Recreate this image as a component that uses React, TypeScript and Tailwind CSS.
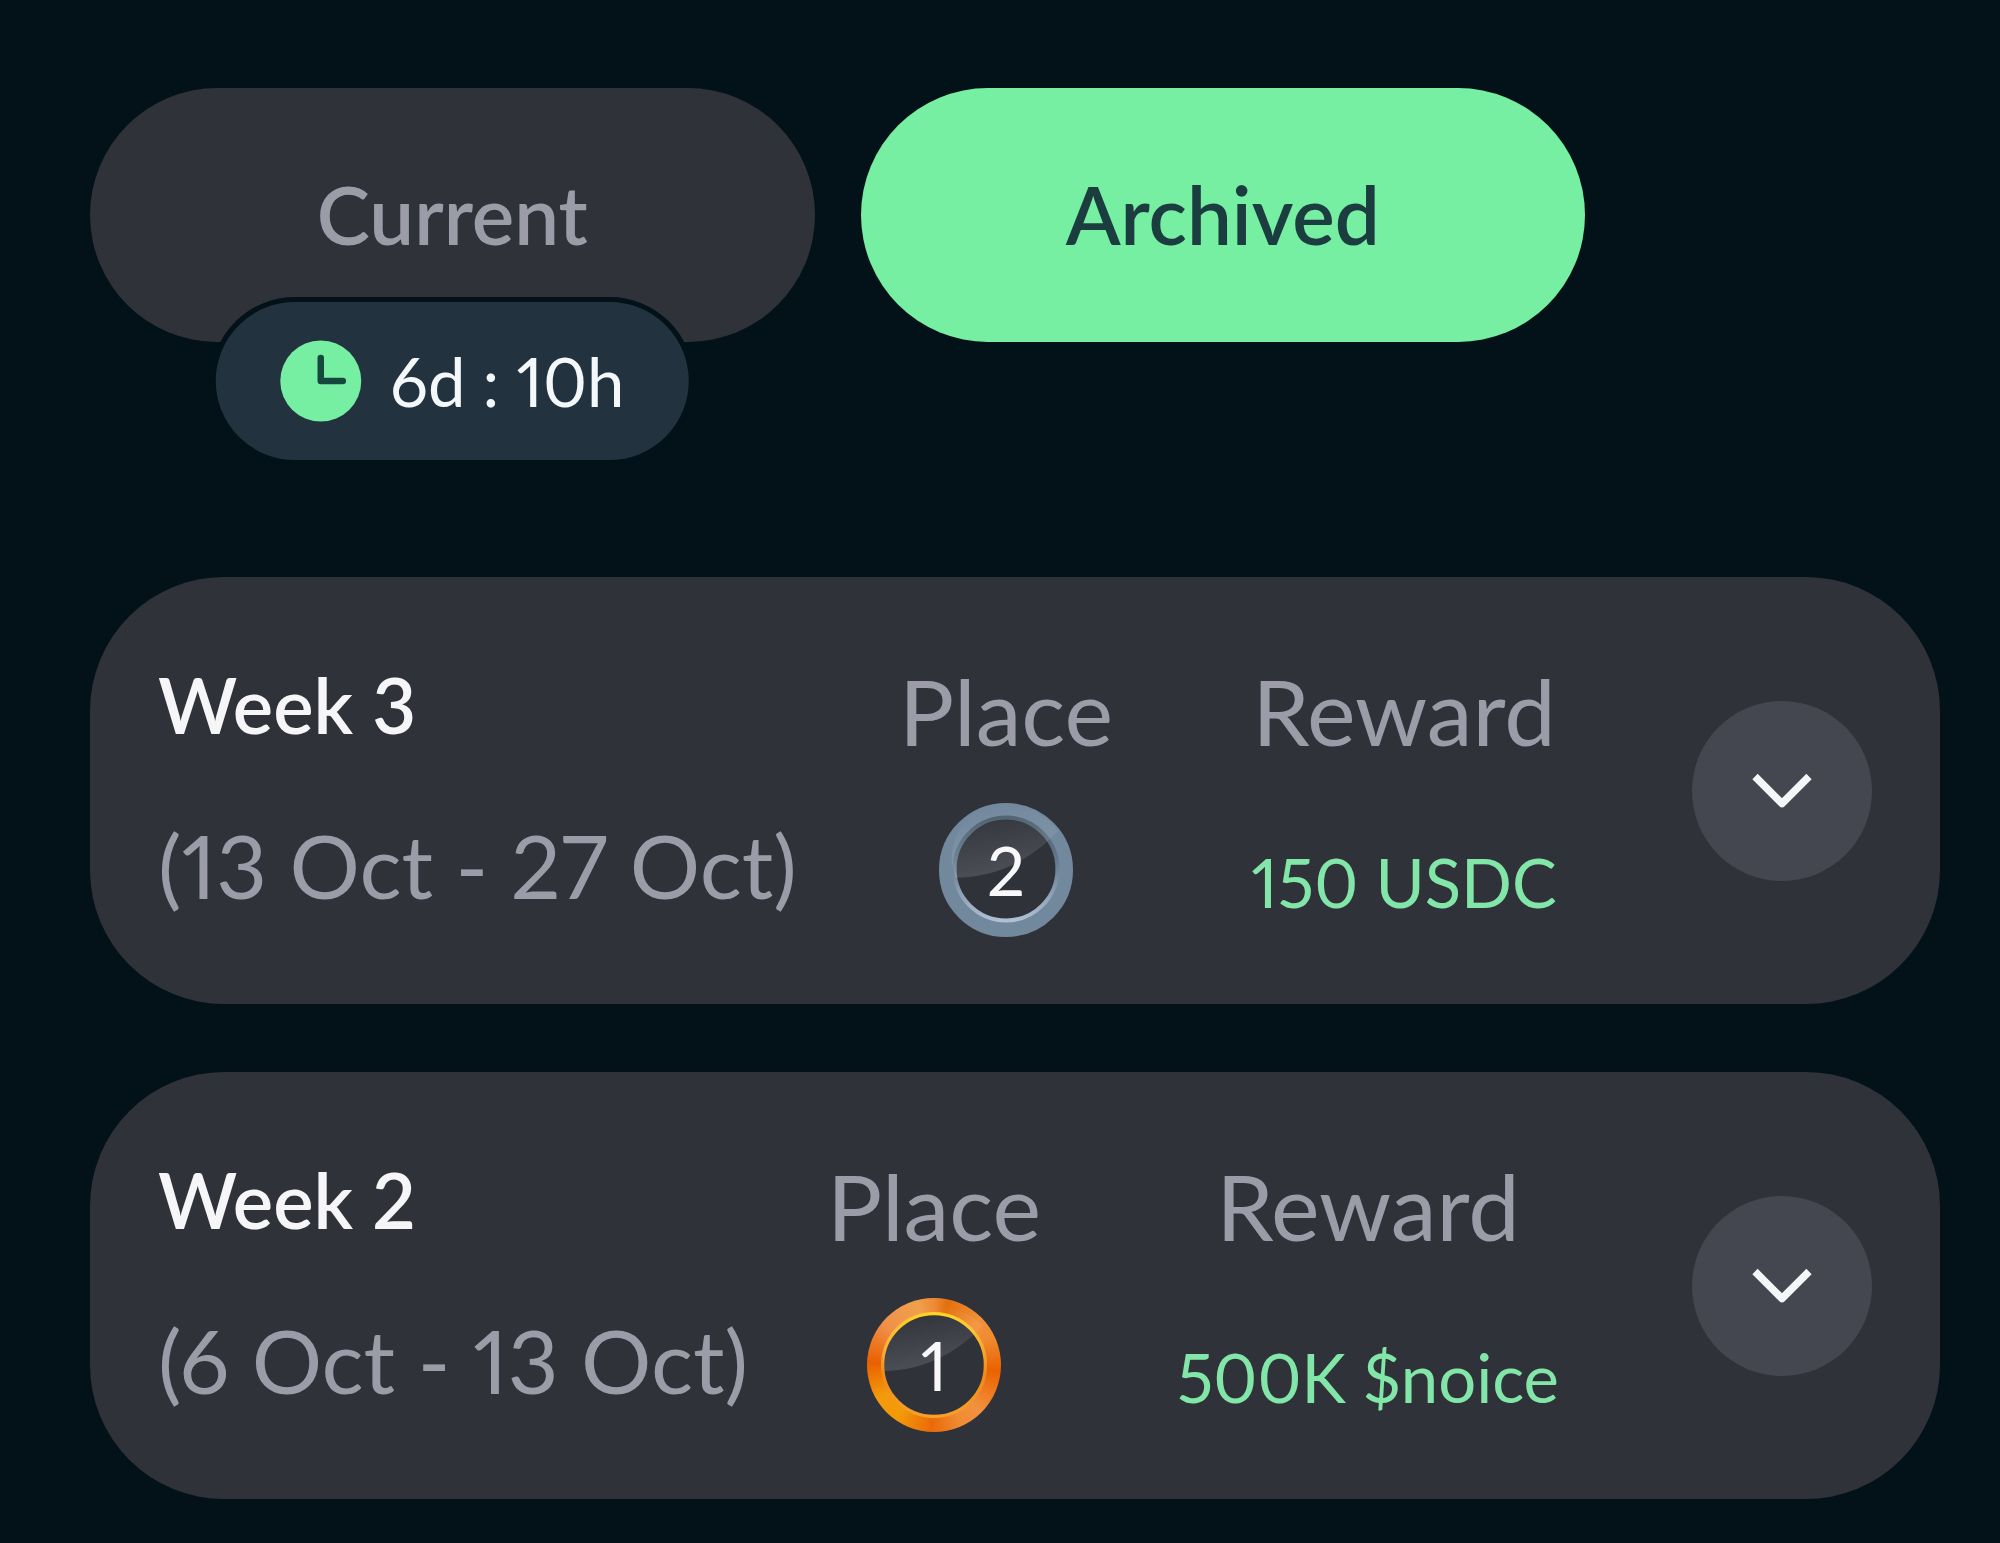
import React, { useState } from "react";

type Medal = "gold" | "silver";

interface Week {
  title: string;
  range: string;
  place: number;
  medal: Medal;
  reward: string;
}

const weeks: Week[] = [
  { title: "Week 3", range: "(13 Oct - 27 Oct)", place: 2, medal: "silver", reward: "150 USDC" },
  { title: "Week 2", range: "(6 Oct - 13 Oct)", place: 1, medal: "gold", reward: "500K $noice" },
];

function ClockIcon() {
  return (
    <svg viewBox="0 0 82 82" className="size-[82px] shrink-0" aria-hidden="true">
      <circle cx="41" cy="41" r="40.5" fill="#77efa3" />
      <path d="M41 18v23h22" fill="none" stroke="#15473e" strokeWidth="6.500" strokeLinecap="round" strokeLinejoin="round" />
    </svg>
  );
}

function ChevronIcon() {
  return (
    <svg viewBox="0 0 64 40" className="h-10 w-16" aria-hidden="true">
      <path d="M5 5.500 32 32.500 59 5.500" fill="none" stroke="#f5f6f8" strokeWidth="7.500" strokeLinejoin="round" />
    </svg>
  );
}

function SilverRing() {
  return (
    <svg viewBox="0 0 404 404" className="col-start-1 row-start-1 size-full" aria-hidden="true">
      <defs>
        <linearGradient id="silver-edge" x1="0" y1="0" x2="0" y2="1">
          <stop offset="0" stopColor="#4c606d" />
          <stop offset="0.4" stopColor="#60768a" />
          <stop offset="0.65" stopColor="#8195aa" />
          <stop offset="1" stopColor="#b0c0d4" />
        </linearGradient>
        <linearGradient id="silver-gloss" x1="0.35" y1="0" x2="0.6" y2="0.9">
          <stop offset="0" stopColor="#fff" stopOpacity="0" />
          <stop offset="1" stopColor="#fff" stopOpacity="0.14" />
        </linearGradient>
      </defs>
      <circle cx="202" cy="202" r="178" fill="none" stroke="#72889d" strokeWidth="48" />
      <circle cx="202" cy="199" r="155" fill="none" stroke="url(#silver-edge)" strokeWidth="12" />
      <path d="M50 225C160 224 270 182 359 83A197 197 0 0 0 202 5A160 160 0 0 0 50 225Z" fill="url(#silver-gloss)" />
    </svg>
  );
}

function GoldRing() {
  return (
    <>
      <span className="col-start-1 row-start-1 size-full rounded-full bg-[conic-gradient(#ee8a35_0deg,#e2700f_12deg,#f2913a_45deg,#f08a30_65deg,#ea6200_95deg,#f2913f_135deg,#f08c34_155deg,#ea6a08_182deg,#f39a0a_215deg,#f29a0c_240deg,#ea6000_272deg,#f0914a_310deg,#f0a04c_345deg,#ee8a35_360deg)]" />
      <svg viewBox="0 0 404 404" className="col-start-1 row-start-1 size-full" aria-hidden="true">
        <defs>
          <linearGradient id="gold-edge" x1="0" y1="0" x2="0" y2="1">
            <stop offset="0" stopColor="#ffd21f" />
            <stop offset="0.35" stopColor="#f7a92c" />
            <stop offset="0.6" stopColor="#ee8a18" />
            <stop offset="1" stopColor="#f7a02c" />
          </linearGradient>
          <linearGradient id="gold-gloss" x1="0.35" y1="0" x2="0.6" y2="0.9">
            <stop offset="0" stopColor="#fff" stopOpacity="0" />
            <stop offset="1" stopColor="#fff" stopOpacity="0.14" />
          </linearGradient>
        </defs>
        <circle cx="202" cy="202" r="155" fill="#2f3239" stroke="url(#gold-edge)" strokeWidth="10" />
        <path d="M52 220C160 218 260 178 350 83A197 197 0 0 0 202 30A160 160 0 0 0 52 220Z" fill="url(#gold-gloss)" />
      </svg>
    </>
  );
}

function PlaceBadge({ place, medal }: { place: number; medal: Medal }) {
  return (
    <span className="mt-9 grid size-[134px] place-items-center">
      {medal === "gold" ? <GoldRing /> : <SilverRing />}
      <span className="z-10 col-start-1 row-start-1 text-[67px] leading-[80px] text-[#f8f8fa]">{place}</span>
    </span>
  );
}

function WeekCard({ week }: { week: Week }) {
  const [open, setOpen] = useState(false);
  return (
    <li className="flex rounded-[134px] bg-[#2f3239] px-[68px] whitespace-nowrap">
      <div className="pt-20">
        <h2 className="text-[76px] leading-[96px] font-semibold text-[#f6f6f8]">{week.title}</h2>
        <p className="mt-14 text-[88px] leading-[112px] text-[#9b9ca8]">{week.range}</p>
      </div>
      <div className="ml-auto flex min-w-[222px] flex-col items-center pt-[78px] pb-[67px]">
        <span className="text-[92px] leading-[112px] text-[#9b9ca8]">Place</span>
        <PlaceBadge place={week.place} medal={week.medal} />
      </div>
      <div className="ml-[132px] flex min-w-[310px] flex-col items-center pt-[78px]">
        <span className="text-[92px] leading-[112px] text-[#9b9ca8]">Reward</span>
        <span className="mt-[75px] text-[67px] leading-[80px] text-[#83e6a9]">{week.reward}</span>
      </div>
      <button
        type="button"
        aria-expanded={open}
        aria-label={`Details for ${week.title}`}
        onClick={() => setOpen(!open)}
        className="ml-[133px] grid size-[180px] shrink-0 place-items-center self-center rounded-full bg-[#44474f]"
      >
        <ChevronIcon />
      </button>
    </li>
  );
}

export default function App() {
  const [tab, setTab] = useState<"current" | "archived">("archived");
  const active = "bg-[#77efa3] text-[#1b3d40]";
  const idle = "bg-[#2f3239] text-[#9b9ca8]";
  const base = "w-full rounded-full pt-[78px] pb-20 text-[80px] leading-[96px] font-semibold";
  return (
    <main className="min-h-screen bg-[#031219] pt-[88px] pr-[60px] pb-11 pl-[90px] font-['Lato',sans-serif] proportional-nums">
      <div className="flex gap-[46px] pr-[355px]">
        <div className="relative flex-1">
          <button type="button" aria-pressed={tab === "current"} onClick={() => setTab("current")} className={`${base} ${tab === "current" ? active : idle}`}>
            Current
          </button>
          <div className="absolute top-[209px] left-1/2 flex -translate-x-1/2 items-center gap-7 rounded-full border-[5px] border-[#031219] bg-[#22333f] px-16 py-[38px] text-[67px] leading-[82px] whitespace-nowrap text-[#f4f8fb]">
            <ClockIcon />
            <span>6d : 10h</span>
          </div>
        </div>
        <div className="flex-1">
          <button type="button" aria-pressed={tab === "archived"} onClick={() => setTab("archived")} className={`${base} ${tab === "archived" ? active : idle}`}>
            Archived
          </button>
        </div>
      </div>
      <ul className="mt-[235px] flex flex-col gap-[68px]">
        {weeks.map((week) => (
          <WeekCard key={week.title} week={week} />
        ))}
      </ul>
    </main>
  );
}
